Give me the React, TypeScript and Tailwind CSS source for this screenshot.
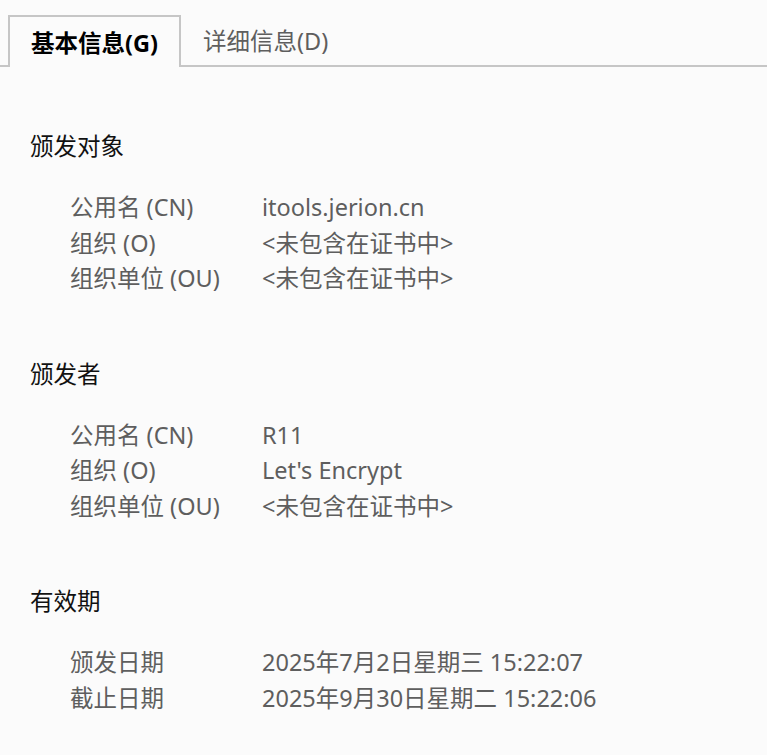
import React from "react";

interface Row {
  label: string;
  value: string;
}

interface Section {
  title: string;
  rows: Row[];
}

const sections: Section[] = [
  {
    title: "颁发对象",
    rows: [
      { label: "公用名 (CN)", value: "itools.jerion.cn" },
      { label: "组织 (O)", value: "<未包含在证书中>" },
      { label: "组织单位 (OU)", value: "<未包含在证书中>" },
    ],
  },
  {
    title: "颁发者",
    rows: [
      { label: "公用名 (CN)", value: "R11" },
      { label: "组织 (O)", value: "Let's Encrypt" },
      { label: "组织单位 (OU)", value: "<未包含在证书中>" },
    ],
  },
  {
    title: "有效期",
    rows: [
      { label: "颁发日期", value: "2025年7月2日星期三 15:22:07" },
      { label: "截止日期", value: "2025年9月30日星期二 15:22:06" },
    ],
  },
];

const App = () => {
  return (
    <div
      className="w-full h-[755px] overflow-hidden bg-[#fbfbfb] text-[23.5px]"
      style={{ fontFamily: '"Noto Sans", "Noto Sans CJK SC", sans-serif' }}
    >
      {/* Tabs */}
      <div className="flex items-end h-[67px] pl-[8px] border-b-2 border-[#c6c6c6]">
        <div className="w-[173px] h-[52px] -mb-[2px] flex items-center justify-center border-2 border-b-0 border-[#c6c6c6] bg-[#fbfbfb] font-bold text-black pt-[4px]">
          基本信息(G)
        </div>
        <div className="h-[50px] pl-[22px] flex items-center text-[#5e5e5e] pt-[4px]">
          详细信息(D)
        </div>
      </div>

      {/* Sections */}
      <div className="pl-[30px] pt-[61px] flex flex-col gap-[59px]">
        {sections.map((section) => (
          <div key={section.title}>
            <h2 className="leading-[36px] text-[#111]">{section.title}</h2>
            <div className="mt-[26px] pl-[40px]">
              {section.rows.map((row) => (
                <div key={row.label} className="flex leading-[35.5px] text-[#5e5e5e]">
                  <span className="w-[192px] shrink-0">{row.label}</span>
                  <span>{row.value}</span>
                </div>
              ))}
            </div>
          </div>
        ))}
      </div>
    </div>
  );
};

export default App;
